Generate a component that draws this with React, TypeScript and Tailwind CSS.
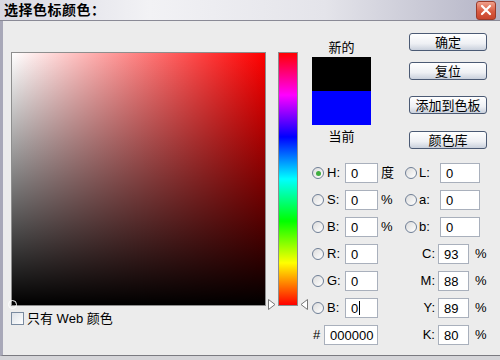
import React from "react";

const font = "font-['Liberation_Sans','Noto_Sans_CJK_SC',sans-serif]";

function Radio({ checked = false }: { checked?: boolean }) {
  return (
    <span className="w-[12px] h-[12px] shrink-0 rounded-full border border-[#6f7f96] bg-[linear-gradient(135deg,#dcdcdc,#ffffff)] flex items-center justify-center">
      {checked && <span className="w-[5px] h-[5px] rounded-full bg-[#3fae3f]" />}
    </span>
  );
}

function Field({ value, w, caret = false }: { value: string; w: string; caret?: boolean }) {
  return (
    <div className={`${w} h-[20px] shrink-0 bg-white border border-[#a9b0bc] pl-[5px] flex items-center text-[13px] leading-none`}>
      {value}
      {caret && <span className="w-px h-[14px] bg-black ml-px" />}
    </div>
  );
}

function Btn({ label }: { label: string }) {
  return (
    <button className="w-[78px] h-[18px] rounded-[3px] border border-[#4b5a74] bg-[linear-gradient(to_bottom,#ffffff,#eef0f4_60%,#c9d0dc)] text-[13px] leading-none flex items-center justify-center text-black">
      {label}
    </button>
  );
}

type Left = { radio?: boolean; checked?: boolean; label: string; value: string; unit?: string; caret?: boolean; hash?: boolean };
type Right = { kind: "radio" | "cmyk" | "none"; label?: string; value?: string };

function Row({ left, right }: { left: Left; right: Right }) {
  return (
    <div className="flex items-center h-[20px]">
      <div className="w-[93px] flex items-center shrink-0">
        {left.hash ? (
          <>
            <span className="w-[12px] pl-[1px] text-[13px]">#</span>
            <Field value={left.value} w="w-[54px]" />
          </>
        ) : (
          <>
            <Radio checked={left.checked} />
            <span className="w-[18px] ml-[3px] text-[13px]">{left.label}</span>
            <Field value={left.value} w="w-[33px]" caret={left.caret} />
            {left.unit && <span className="ml-[3px] text-[13px]">{left.unit}</span>}
          </>
        )}
      </div>
      {right.kind === "radio" && (
        <div className="flex items-center">
          <Radio />
          <span className="w-[21px] ml-[2px] text-[13px]">{right.label}</span>
          <Field value={right.value!} w="w-[40px]" />
        </div>
      )}
      {right.kind === "cmyk" && (
        <div className="flex items-center">
          <span className="w-[33px] pr-[3px] text-right text-[13px]">{right.label}</span>
          <Field value={right.value!} w="w-[31px]" />
          <span className="ml-[6px] text-[13px]">%</span>
        </div>
      )}
    </div>
  );
}

export default function App() {
  const rows: { left: Left; right: Right }[] = [
    { left: { radio: true, checked: true, label: "H:", value: "0", unit: "度" }, right: { kind: "radio", label: "L:", value: "0" } },
    { left: { radio: true, label: "S:", value: "0", unit: "%" }, right: { kind: "radio", label: "a:", value: "0" } },
    { left: { radio: true, label: "B:", value: "0", unit: "%" }, right: { kind: "radio", label: "b:", value: "0" } },
    { left: { radio: true, label: "R:", value: "0" }, right: { kind: "cmyk", label: "C:", value: "93" } },
    { left: { radio: true, label: "G:", value: "0" }, right: { kind: "cmyk", label: "M:", value: "88" } },
    { left: { radio: true, label: "B:", value: "0", caret: true }, right: { kind: "cmyk", label: "Y:", value: "89" } },
    { left: { hash: true, label: "#", value: "000000" }, right: { kind: "cmyk", label: "K:", value: "80" } },
  ];

  return (
    <div className={`w-[500px] h-[360px] bg-[#d4d4d8] text-black ${font} overflow-hidden`}>
      {/* title bar */}
      <div className="h-[21px] flex items-center justify-between pl-[4px] pr-[4px] border-b border-[#8a8a96] bg-[linear-gradient(to_right,#d8d8e2,#f2f2f5_30%,#e4e4ea_65%,#b4b4c6)]">
        <span className="text-[14px] font-bold leading-none tracking-[0.5px]">选择色标颜色：</span>
        <div className="w-[20px] h-[19px] rounded-[3px] border border-[#9a3a2a] bg-[linear-gradient(to_bottom,#f0a08c,#d85a40_55%,#c8442c)] flex items-center justify-center">
          <svg width="12" height="12" viewBox="0 0 12 12">
            <path d="M2 2 L10 10 M10 2 L2 10" stroke="#fff" strokeWidth="2.2" strokeLinecap="round" />
          </svg>
        </div>
      </div>

      {/* body */}
      <div className="h-[335px] bg-[#ececec] border-l-[3px] border-[#a8a8b8] border-b border-b-[#7a7a80] flex">
        {/* colour field */}
        <div className="pl-[8px] pt-[31px] flex flex-col">
          <div className="relative w-[255px] h-[254px] border border-[#8e8e8e] bg-[linear-gradient(to_bottom,transparent,#000),linear-gradient(to_right,#fff,#f00)]">
            <span className="absolute left-[-4px] bottom-[-4px] w-[9px] h-[9px] rounded-full border border-white" />
          </div>
          <label className="mt-[6px] flex items-center gap-[3px] text-[13px] leading-none">
            <span className="w-[13px] h-[13px] border border-[#7a8ba0] bg-[linear-gradient(135deg,#dde2e8,#ffffff)]" />
            <span>只有 Web 颜色</span>
          </label>
        </div>

        {/* hue bar */}
        <div className="ml-[12px] pt-[31px]">
          <div className="relative w-[20px] h-[254px] border border-[#8e8e8e] bg-[linear-gradient(to_bottom,#f00,#f0f_16.7%,#00f_33.3%,#0ff_50%,#0f0_66.7%,#ff0_83.3%,#f00)]">
            <svg className="absolute left-[-11px] bottom-[-5px]" width="8" height="11" viewBox="0 0 8 11">
              <path d="M0.5 0.5 L7 5.5 L0.5 10.5 Z" fill="#fff" stroke="#777" />
            </svg>
            <svg className="absolute right-[-11px] bottom-[-5px]" width="8" height="11" viewBox="0 0 8 11">
              <path d="M7.5 0.5 L1 5.5 L7.5 10.5 Z" fill="#fff" stroke="#777" />
            </svg>
          </div>
        </div>

        {/* controls */}
        <div className="ml-[14px] flex flex-col">
          <div className="h-[142px] flex">
            <div className="w-[59px] flex flex-col items-center pt-[20px]">
              <span className="text-[13px] leading-[14px]">新的</span>
              <div className="mt-[2px] w-[59px] h-[68px] flex flex-col">
                <div className="h-[34px] bg-black" />
                <div className="h-[34px] bg-[#0000ff]" />
              </div>
              <span className="mt-[5px] text-[13px] leading-[14px]">当前</span>
            </div>
            <div className="ml-[38px] pt-[12px] flex flex-col">
              <Btn label="确定" />
              <div className="mt-[11px]"><Btn label="复位" /></div>
              <div className="mt-[16px]"><Btn label="添加到色板" /></div>
              <div className="mt-[17px]"><Btn label="颜色库" /></div>
            </div>
          </div>
          <div className="flex flex-col gap-[7px]">
            {rows.map((r, i) => (
              <Row key={i} left={r.left} right={r.right} />
            ))}
          </div>
        </div>
      </div>
    </div>
  );
}
